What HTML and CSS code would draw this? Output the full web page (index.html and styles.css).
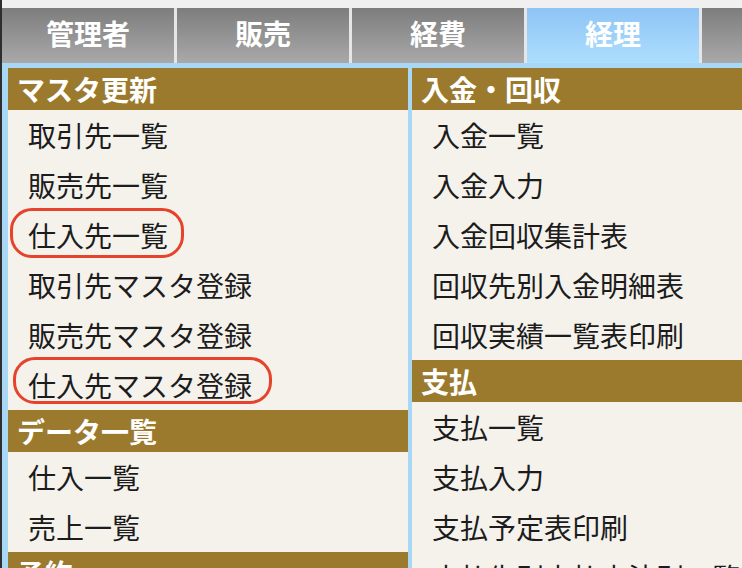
FILE: index.html
```html
<!DOCTYPE html>
<html lang="ja">
<head>
<meta charset="utf-8">
<title>メニュー</title>
<link rel="stylesheet" href="styles.css">
</head>
<body>
<div class="page">
  <nav class="tabs">
    <div class="tab">管理者</div>
    <div class="tab">販売</div>
    <div class="tab">経費</div>
    <div class="tab active">経理</div>
    <div class="tab"></div>
  </nav>
  <div class="panel">
    <div class="col">
      <div class="sec-h">マスタ更新</div>
      <div class="item">取引先一覧</div>
      <div class="item">販売先一覧</div>
      <div class="item marked"><span class="ring ring-a"></span>仕入先一覧</div>
      <div class="item">取引先マスタ登録</div>
      <div class="item">販売先マスタ登録</div>
      <div class="item marked"><span class="ring ring-b"></span>仕入先マスタ登録</div>
      <div class="sec-h">データ一覧</div>
      <div class="item">仕入一覧</div>
      <div class="item">売上一覧</div>
      <div class="sec-h">予約</div>
    </div>
    <div class="col">
      <div class="sec-h">入金・回収</div>
      <div class="item">入金一覧</div>
      <div class="item">入金入力</div>
      <div class="item">入金回収集計表</div>
      <div class="item">回収先別入金明細表</div>
      <div class="item">回収実績一覧表印刷</div>
      <div class="sec-h">支払</div>
      <div class="item">支払一覧</div>
      <div class="item">支払入力</div>
      <div class="item">支払予定表印刷</div>
      <div class="item">支払先別支払方法別一覧</div>
    </div>
  </div>
</div>
</body>
</html>
```
FILE: styles.css
```css
html, body {
  margin: 0;
  padding: 0;
  background: #f0f0f0;
  overflow: hidden;
  font-family: "Noto Sans CJK JP", "Noto Sans", sans-serif;
}
.page {
  border-left: 2px solid #2e2e2e;
  height: 568px;
  box-sizing: border-box;
  padding-top: 8px;
  width: 742px;
  overflow: hidden;
}
.tabs {
  display: flex;
  gap: 3px;
  height: 55px;
  background: #e6e6e6;
  width: 900px;
}
.tab {
  flex: none;
  width: 172px;
  height: 55px;
  line-height: 51px;
  text-align: center;
  color: #ffffff;
  font-size: 28px;
  font-weight: 700;
  background: linear-gradient(to bottom, #7d7d7d, #a9a9a9);
}
.tab.active {
  background: linear-gradient(to bottom, #8fc3f5, #acdffd);
}
.panel {
  display: flex;
  gap: 4px;
  padding: 5px 0 0 6px;
  background: #a9d8f6;
  width: 900px;
  height: 520px;
}
.col {
  flex: none;
  width: 400px;
  background: #f5f2ec;
}
.sec-h {
  height: 42px;
  line-height: 42px;
  padding-left: 9px;
  background: #9b7a2e;
  color: #ffffff;
  font-size: 28px;
  font-weight: 700;
  white-space: nowrap;
}
.item {
  height: 50px;
  line-height: 50px;
  padding-left: 20px;
  font-size: 28px;
  color: #1c1c1c;
  white-space: nowrap;
}
.marked {
  position: relative;
}
.ring {
  position: absolute;
  border: 3px solid #e5432b;
  border-radius: 22px;
  box-sizing: border-box;
}
.ring-a {
  left: 2px;
  top: -2px;
  width: 174px;
  height: 50px;
}
.ring-b {
  left: 5px;
  top: -3px;
  width: 259px;
  height: 47px;
}
```
